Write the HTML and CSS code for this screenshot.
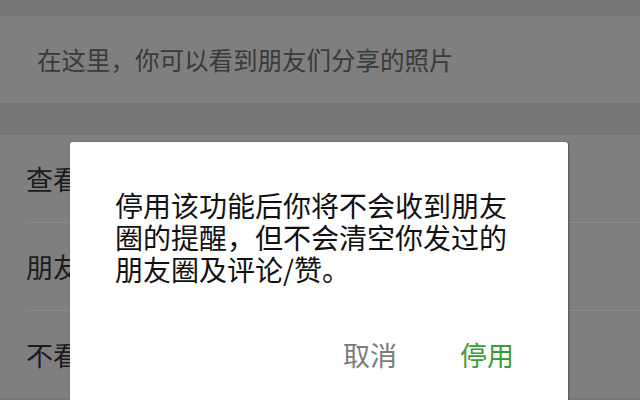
FILE: index.html
```html
<!DOCTYPE html>
<html lang="zh-CN">
<head>
<meta charset="utf-8">
<title>朋友圈</title>
<link rel="stylesheet" href="styles.css">
</head>
<body>
<div class="screen">
  <div class="gap-top"></div>
  <div class="tip">在这里，你可以看到朋友们分享的照片</div>
  <div class="gap-mid"></div>
  <div class="list">
    <div class="row"><span class="label">查看</span></div>
    <div class="row"><span class="label">朋友</span></div>
    <div class="row"><span class="label">不看</span></div>
  </div>
  <div class="dialog">
    <p class="message">停用该功能后你将不会收到朋友圈的提醒，但不会清空你发过的朋友圈及评论/赞。</p>
    <div class="actions">
      <span class="btn cancel">取消</span>
      <span class="btn confirm">停用</span>
    </div>
  </div>
</div>
</body>
</html>
```
FILE: styles.css
```css
html, body {
  margin: 0;
  padding: 0;
}
body {
  width: 640px;
  height: 400px;
  overflow: hidden;
  background: #767676;
  font-family: "Noto Sans CJK SC", "Noto Sans", sans-serif;
}
.screen {
  position: relative;
  width: 640px;
  height: 400px;
  display: flex;
  flex-direction: column;
}
.gap-top {
  height: 16px;
  flex: none;
}
.tip {
  height: 87px;
  flex: none;
  background: #7f7f7f;
  color: #3a3a3a;
  font-size: 24.5px;
  display: flex;
  align-items: center;
  padding-left: 37px;
  white-space: nowrap;
}
.gap-mid {
  height: 32px;
  flex: none;
}
.list {
  background: #7f7f7f;
  padding-left: 26px;
  flex: none;
}
.row {
  height: 87px;
  display: flex;
  align-items: center;
  font-size: 27px;
  color: #1c1c1c;
  border-bottom: 1px solid #8a8a8a;
  white-space: nowrap;
}
.row:last-child {
  border-bottom: none;
}
.label {
  display: block;
  width: 44px;
  overflow: hidden;
}
.dialog {
  position: absolute;
  left: 70px;
  top: 142px;
  width: 498px;
  height: 258px;
  background: #ffffff;
  border-radius: 3px 3px 0 0;
  box-shadow: 1px 0 2px rgba(0,0,0,0.35);
  box-sizing: border-box;
  padding: 47px 50px 0 45px;
}
.message {
  margin: 0;
  font-size: 28px;
  line-height: 32px;
  color: #111111;
}
.actions {
  display: flex;
  justify-content: flex-end;
  gap: 63px;
  margin-top: 54px;
  padding-right: 4px;
}
.btn {
  font-size: 27px;
  line-height: 32px;
}
.cancel {
  color: #7b7b7b;
}
.confirm {
  color: #3a9c3a;
}
```
